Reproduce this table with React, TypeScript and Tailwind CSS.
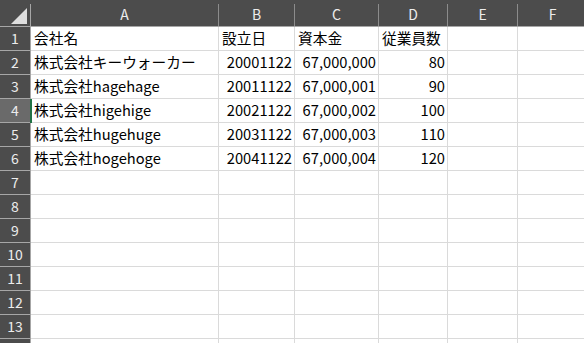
const cols = [
  { key: "A", w: "w-[188px]" },
  { key: "B", w: "w-[76px]" },
  { key: "C", w: "w-[84px]" },
  { key: "D", w: "w-[69px]" },
  { key: "E", w: "w-[70px]" },
  { key: "F", w: "w-[70px]" },
];

const rows: { v: string; right?: boolean }[][] = [
  [{ v: "会社名" }, { v: "設立日" }, { v: "資本金" }, { v: "従業員数" }],
  [
    { v: "株式会社キーウォーカー" },
    { v: "20001122", right: true },
    { v: "67,000,000", right: true },
    { v: "80", right: true },
  ],
  [
    { v: "株式会社hagehage" },
    { v: "20011122", right: true },
    { v: "67,000,001", right: true },
    { v: "90", right: true },
  ],
  [
    { v: "株式会社higehige" },
    { v: "20021122", right: true },
    { v: "67,000,002", right: true },
    { v: "100", right: true },
  ],
  [
    { v: "株式会社hugehuge" },
    { v: "20031122", right: true },
    { v: "67,000,003", right: true },
    { v: "110", right: true },
  ],
  [
    { v: "株式会社hogehoge" },
    { v: "20041122", right: true },
    { v: "67,000,004", right: true },
    { v: "120", right: true },
  ],
];

const font = "font-['Noto_Sans_CJK_JP','Noto_Sans',sans-serif]";

export default function App() {
  const selectedRow = 4;

  return (
    <div className={`h-[343px] w-[584px] overflow-hidden bg-white ${font}`}>
      {/* column headers */}
      <div className="flex h-[27px] bg-[#4c4c4c] pt-[4px] border-b border-[#a6a6a6]">
        <div className="relative w-[31px] shrink-0 border-r border-[#a6a6a6]">
          {/* select-all triangle */}
          <svg
            className="absolute right-[3px] bottom-[2px]"
            width="16"
            height="16"
            viewBox="0 0 16 16"
          >
            <polygon points="16,0 16,16 0,16" fill="#dedede" />
          </svg>
        </div>
        {cols.map((c) => (
          <div
            key={c.key}
            className={`${c.w} shrink-0 border-r border-[#8c8c8c] flex items-start justify-center pt-[1px] text-[14px] leading-[18px] text-[#ececec]`}
          >
            {c.key}
          </div>
        ))}
      </div>

      {/* rows */}
      {Array.from({ length: 14 }, (_, i) => {
        const n = i + 1;
        const data = rows[i] || [];
        const sel = n === selectedRow;
        return (
          <div key={n} className="flex h-[24px]">
            <div
              className={`relative w-[31px] shrink-0 border-r border-b border-[#a6a6a6] flex items-center justify-center text-[14px] text-[#ececec] ${
                sel ? "bg-[#6a6a6a]" : "bg-[#4c4c4c]"
              }`}
            >
              {n < 14 ? n : ""}
              {sel && (
                <div className="absolute right-[-2px] top-0 h-[24px] w-[2px] bg-[#217346]" />
              )}
            </div>
            {cols.map((c, j) => {
              const cell = data[j];
              return (
                <div
                  key={c.key}
                  className={`${c.w} shrink-0 border-r border-b border-[#dadada] flex items-center overflow-hidden whitespace-nowrap text-[14.7px] text-black ${
                    cell?.right ? "justify-end pr-[2px]" : "pl-[3px]"
                  }`}
                >
                  {cell?.v}
                </div>
              );
            })}
          </div>
        );
      })}
    </div>
  );
}
